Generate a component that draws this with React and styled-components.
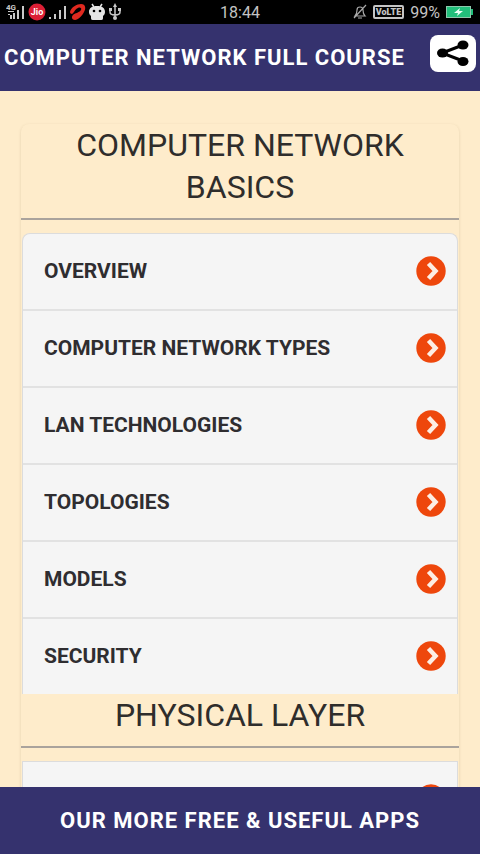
import React from 'react'
import styled, { createGlobalStyle } from 'styled-components'

const sections = [
  {
    title: 'COMPUTER NETWORK BASICS',
    topics: ['OVERVIEW', 'COMPUTER NETWORK TYPES', 'LAN TECHNOLOGIES', 'TOPOLOGIES', 'MODELS', 'SECURITY'],
  },
  {
    title: 'PHYSICAL LAYER',
    topics: [''],
  },
]

const SignalFourG = () => (
  <svg width="20" height="20" viewBox="0 0 20 20" fill="#c9c9c9" aria-hidden="true">
    <text x="0" y="8" fontSize="8" fontWeight="700">4G</text>
    <path d="M2 9h6v1H2zM2 12h2v1H2zM4 13h2v4H4zM7 11h2v6H7zM11 8h2v9h-2zM16 4h2v13h-2z" />
  </svg>
)

const JioLogo = () => (
  <svg width="18" height="18" viewBox="0 0 18 18" aria-hidden="true">
    <circle cx="9" cy="9" r="8.5" fill="#dc1f35" />
    <text x="9" y="12" fontSize="9" fontWeight="700" fill="#fff" textAnchor="middle">Jio</text>
  </svg>
)

const Signal = () => (
  <svg width="19" height="20" viewBox="0 0 19 20" fill="#c9c9c9" aria-hidden="true">
    <path d="M1 15h2v2H1zM6 12h2v5H6zM11 8h2v9h-2zM16 4h2v13h-2z" />
  </svg>
)

const AirtelLogo = () => (
  <svg width="17" height="18" viewBox="0 0 17 18" aria-hidden="true">
    <path d="M1 9C2 4 8 1 12 1c5 0 5 5 3 8-2 4-6 8-9 8-3 0-4-3-2-5 2-2 6-2 8-5 1-2-1-3-3-2-3 1-4 5-6 6-1 0-2-1-2-2z" fill="#e0291f" />
  </svg>
)

const AndroidHead = () => (
  <svg width="18" height="18" viewBox="0 0 18 18" aria-hidden="true">
    <path d="M4 1l2 3M14 1l-2 3" stroke="#e6e6e6" strokeWidth="1.5" />
    <path d="M1 9c0-4 3-6 8-6s8 2 8 6c0 2-1 3-2 4v2c0 2-1 2-3 2H6c-2 0-3 0-3-2v-2c-1-1-2-2-2-4z" fill="#e6e6e6" />
    <circle cx="6" cy="8" r="1.3" />
    <circle cx="12" cy="8" r="1.3" />
  </svg>
)

const UsbIcon = () => (
  <svg width="14" height="18" viewBox="0 0 14 18" fill="none" stroke="#c9c9c9" strokeWidth="1.5" aria-hidden="true">
    <path d="M7 3v12M2 7v2c0 2 2 3 5 3s5-1 5-3V7" />
    <path d="M7 0l2 4H5zM1 5h3v3H1zM10 5h3v3h-3z" fill="#c9c9c9" stroke="none" />
    <circle cx="7" cy="15" r="2" fill="#c9c9c9" stroke="none" />
  </svg>
)

const MutedBell = () => (
  <svg width="14" height="16" viewBox="0 0 14 16" fill="none" stroke="#a9a9a9" strokeWidth="1.2" aria-hidden="true">
    <path d="M2 12c2-2 2-4 2-6s1-3 3-3 3 1 3 3 0 4 2 6zM5 14h4M1 14L13 1" />
  </svg>
)

const Battery = () => (
  <svg width="28" height="12" viewBox="0 0 28 12" aria-hidden="true">
    <rect x="0.5" y="0.5" width="24" height="11" fill="#22bf7b" stroke="#8fc9ad" />
    <path d="M25 3h2v6h-2z" fill="#22bf7b" />
    <path d="M14 2L8 7h4l-1 3 6-5h-4z" fill="#e9fff5" />
  </svg>
)

const ShareIcon = () => (
  <svg width="46" height="37" viewBox="0 0 46 37" aria-hidden="true">
    <path d="M33 10L12 18l21 8" fill="none" stroke="#000" strokeWidth="3" />
    <ellipse cx="12.5" cy="18" rx="5.5" ry="4.5" />
    <ellipse cx="33" cy="10" rx="5.5" ry="4.5" />
    <ellipse cx="33" cy="26.5" rx="5.5" ry="4.5" />
  </svg>
)

const ArrowIcon = () => (
  <svg width="30" height="30" viewBox="0 0 30 30" aria-hidden="true">
    <circle cx="15" cy="15" r="14.7" fill="#ee470c" />
    <path d="M12.5 7.500L19.500 15l-7 7.500" fill="none" stroke="#fdeee4" strokeWidth="4.500" />
  </svg>
)

const App = () => {
  return (
    <>
      <GlobalStyle />
      <Screen>
        <StatusBar>
          <StatusGroup>
            <SignalFourG />
            <JioLogo />
            <Signal />
            <AirtelLogo />
            <AndroidHead />
            <UsbIcon />
          </StatusGroup>
          <Clock>18:44</Clock>
          <StatusGroup $end>
            <MutedBell />
            <Volte>VoLTE</Volte>
            <span>99%</span>
            <Battery />
          </StatusGroup>
        </StatusBar>
        <Header>
          <Title>COMPUTER NETWORK FULL COURSE</Title>
          <ShareButton aria-label="Share">
            <ShareIcon />
          </ShareButton>
        </Header>
        <Content>
          <Panel>
            {sections.map((section) => (
              <section key={section.title}>
                <SectionTitle>{section.title}</SectionTitle>
                <Topics>
                  {section.topics.map((topic) => (
                    <li key={topic}>
                      <TopicLink href="#" aria-label={topic || section.title}>
                        <span>{topic}</span>
                        <ArrowIcon />
                      </TopicLink>
                    </li>
                  ))}
                </Topics>
              </section>
            ))}
          </Panel>
        </Content>
        <MoreApps>OUR MORE FREE &amp; USEFUL APPS</MoreApps>
      </Screen>
    </>
  )
}

export default App

const GlobalStyle = createGlobalStyle`
* {
  box-sizing: border-box;
}
body {
  margin: 0;
  font-family: Roboto, "Liberation Sans", sans-serif;
  background: #feeccb;
  color: #2f2d2b;
}
`

const Screen = styled.div`
display: flex;
flex-direction: column;
height: 100vh;
`

const StatusBar = styled.div`
display: grid;
grid-template-columns: 1fr auto 1fr;
align-items: center;
flex: none;
height: 24px;
padding: 0 6px;
background: #000;
color: #c4c4c4;
font-size: 16px;
`

const StatusGroup = styled.div`
display: flex;
align-items: center;
justify-content: ${(props) => (props.$end ? 'flex-end' : 'flex-start')};
gap: ${(props) => (props.$end ? '6px' : '2px')};
`

const Clock = styled.span`
font-size: 16px;
`

const Volte = styled.span`
border: 2px solid #c4c4c4;
border-radius: 2px;
padding: 0 1px;
font-size: 9px;
line-height: 10px;
font-weight: 900;
`

const Header = styled.header`
display: flex;
align-items: center;
justify-content: space-between;
flex: none;
height: 67px;
padding: 0 4px;
background: #35326e;
`

const Title = styled.h1`
margin: 0;
font-size: 22px;
font-weight: 700;
letter-spacing: 1px;
white-space: nowrap;
color: #fff;
`

const ShareButton = styled.button`
display: flex;
flex: none;
padding: 0;
border: 0;
border-radius: 8px;
margin-bottom: 8px;
background: #fff;
`

const Content = styled.main`
flex: 1;
min-height: 0;
overflow: hidden auto;
scrollbar-width: none;
padding: 33px 21px 0;
`

const Panel = styled.div`
border-radius: 8px;
box-shadow: 0 1px 3px rgba(120, 100, 60, 0.2);
`

const SectionTitle = styled.h2`
margin: 0 0 13px;
padding: 0 32px 10px;
border-bottom: 2px solid #aaa39c;
font-size: 32px;
line-height: 42px;
font-weight: 400;
text-align: center;
`

const Topics = styled.ul`
margin: 0 1px;
padding: 0;
list-style: none;
border: 1px solid #dcdcdc;
border-bottom: 0;
border-radius: 8px 8px 0 0;
background: #f5f5f5;
overflow: hidden;

section + section & {
  border-radius: 0;
}

li + li {
  border-top: 2px solid #e2e2e2;
}
`

const TopicLink = styled.a`
display: flex;
align-items: center;
justify-content: space-between;
height: 75px;
padding: 0 11px 2px 21px;
color: #2f2d30;
font-size: 21px;
font-weight: 700;
text-decoration: none;
`

const MoreApps = styled.button`
flex: none;
height: 67px;
border: 0;
background: #35326e;
color: #fff;
font-family: inherit;
font-size: 22px;
font-weight: 700;
letter-spacing: 1px;
`
